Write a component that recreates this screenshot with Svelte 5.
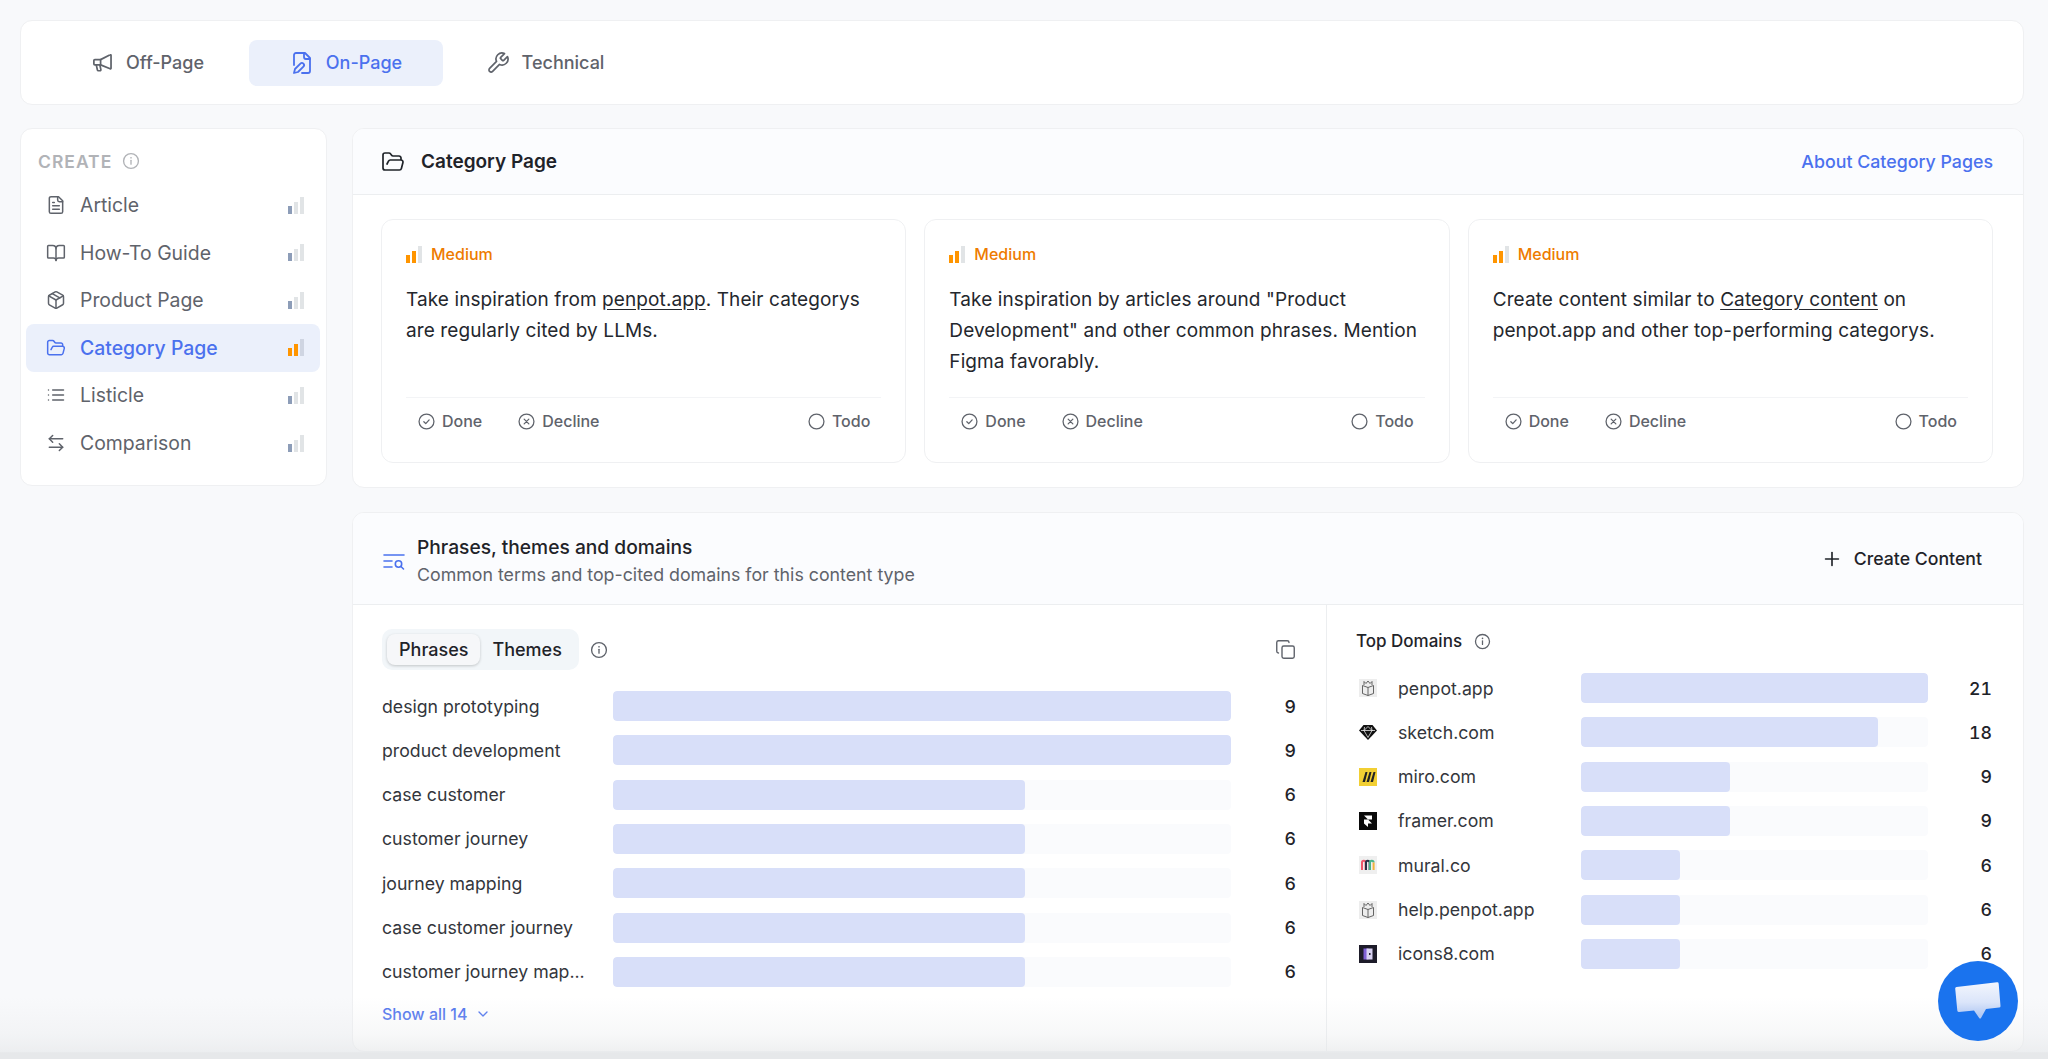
<script>
  const I = {
    speaker: ['M4 9h6l10-5a.6.6 0 0 1 .9.5v13.500a.6.6 0 0 1-.9.5L10 14.500H4a1 1 0 0 1-1-1V10a1 1 0 0 1 1-1z', 'M10 9v5.500', 'M5.500 14.500l1.200 5.300a1 1 0 0 0 1 .8h1.600a1 1 0 0 0 1-1.200l-1-4.400'],
    filepen: ['M12 22h6a2 2 0 0 0 2-2V7l-5-5H6a2 2 0 0 0-2 2v10', 'M14 2v4a2 2 0 0 0 2 2h4', 'M10.4 12.6a2 2 0 1 1 3 3L8 21l-4 1 1-4Z'],
    wrench: ['M14.7 6.3a1 1 0 0 0 0 1.4l1.6 1.6a1 1 0 0 0 1.4 0l3.77-3.77a6 6 0 0 1-7.94 7.94l-6.91 6.91a2.12 2.12 0 0 1-3-3l6.91-6.91a6 6 0 0 1 7.94-7.94l-3.76 3.76z'],
    file: ['M15 2H6a2 2 0 0 0-2 2v16a2 2 0 0 0 2 2h12a2 2 0 0 0 2-2V7Z', 'M14 2v4a2 2 0 0 0 2 2h4', 'M10 9H8', 'M16 13H8', 'M16 17H8'],
    book: ['M12 7v14', 'M3 18a1 1 0 0 1-1-1V4a1 1 0 0 1 1-1h5a4 4 0 0 1 4 4 4 4 0 0 1 4-4h5a1 1 0 0 1 1 1v13a1 1 0 0 1-1 1h-6a3 3 0 0 0-3 3 3 3 0 0 0-3-3z'],
    box: ['M21 8a2 2 0 0 0-1-1.73l-7-4a2 2 0 0 0-2 0l-7 4A2 2 0 0 0 3 8v8a2 2 0 0 0 1 1.73l7 4a2 2 0 0 0 2 0l7-4A2 2 0 0 0 21 16Z', 'M3.3 7 12 12l8.7-5', 'M12 22V12', 'M7.5 4.27l9 5.15'],
    folder: ['M6 14l1.5-2.9A2 2 0 0 1 9.24 10H20a2 2 0 0 1 1.94 2.5l-1.54 6a2 2 0 0 1-1.95 1.5H4a2 2 0 0 1-2-2V5a2 2 0 0 1 2-2h3.9a2 2 0 0 1 1.69.9l.81 1.2a2 2 0 0 0 1.67.9H18a2 2 0 0 1 2 2v2'],
    list: ['M3 6h.01', 'M3 12h.01', 'M3 18h.01', 'M8 6h13', 'M8 12h13', 'M8 18h13'],
    swap: ['M8 3 4 7l4 4', 'M4 7h16', 'M16 21l4-4-4-4', 'M20 17H4'],
    copy: ['M10 8h10a2 2 0 0 1 2 2v10a2 2 0 0 1-2 2H10a2 2 0 0 1-2-2V10a2 2 0 0 1 2-2z', 'M4 16a2 2 0 0 1-2-2V4a2 2 0 0 1 2-2h10a2 2 0 0 1 2 2'],
    plus: ['M5 12h14', 'M12 5v14'],
    chev: ['m6 9 6 6 6-6']
  };
  const nav = [
    ['Article', 'file'], ['How-To Guide', 'book'], ['Product Page', 'box'],
    ['Category Page', 'folder'], ['Listicle', 'list'], ['Comparison', 'swap']
  ];
  const ideas = [
    ['Take inspiration from ', 'penpot.app', '. Their categorys are regularly cited by LLMs.'],
    ['Take inspiration by articles around "Product Development" and other common phrases. Mention Figma favorably.', '', ''],
    ['Create content similar to ', 'Category content', ' on penpot.app and other top-performing categorys.']
  ];
  const phrases = [
    ['design prototyping', 9], ['product development', 9], ['case customer', 6], ['customer journey', 6],
    ['journey mapping', 6], ['case customer journey', 6], ['customer journey map...', 6]
  ];
  const domains = [
    ['penpot.app', 21, 'penpot'], ['sketch.com', 18, 'sketch'], ['miro.com', 9, 'miro'], ['framer.com', 9, 'framer'],
    ['mural.co', 6, 'mural'], ['help.penpot.app', 6, 'penpot'], ['icons8.com', 6, 'icons8']
  ];
</script>

{#snippet icon(name, size, sw = 2)}
  <svg class="ic" width={size} height={size} viewBox="0 0 24 24" fill="none" stroke="currentColor" stroke-width={sw} stroke-linecap="round" stroke-linejoin="round">
    {#each I[name] as d}<path {d} />{/each}
  </svg>
{/snippet}

{#snippet info(size)}
  <svg class="ic" width={size} height={size} viewBox="0 0 16 16" fill="none" stroke="currentColor" stroke-width="1.2" stroke-linecap="round">
    <circle cx="8" cy="8" r="6.6" /><path d="M8 7.4v3.4" /><path d="M8 5.1h.01" stroke-width="1.5" />
  </svg>
{/snippet}

{#snippet level(active, on = '#8d9db8', off = '#e1e4e6', mid = false)}
  <span class="lvl">
    <i class="b1" style="background:{active ? '#ff9500' : on}"></i>
    <i class="b2" style="background:{active ? '#ff9500' : off}"></i>
    <i class="b3" style="background:{mid ? '#cfd5e2' : off}"></i>
  </span>
{/snippet}

{#snippet favicon(kind)}
  <svg class="fav" width="18" height="18" viewBox="0 0 18 18">
    {#if kind === 'penpot'}
      <rect width="18" height="18" fill="#ededed" />
      <path d="M3.500 6.500 9 8.500l5.500-2v8L9 16.500l-5.500-2zM9 8.500v8M5 6V2.500L7 4.500l2-2.500 2 2.500 2-2V6" fill="none" stroke="#555" stroke-width=".9" stroke-linejoin="round" />
    {:else if kind === 'sketch'}
      <path d="M4.500 2h9L18 7.500 9 17 0 7.500z" fill="#111" />
      <path d="M2 7.500h14M5 7.500 9 14.500l4-7M5.500 4 5 7.500 9 3.500l4 4-.5-3.500" fill="none" stroke="#fff" stroke-width=".7" />
    {:else if kind === 'miro'}
      <rect width="18" height="18" fill="#f2cf33" />
      <path d="M6.500 4h2L6 14H3.500zM10.500 4h2L10 14H7.500zM14.500 4h2L14 14h-2.500z" fill="#232323" />
    {:else if kind === 'framer'}
      <rect width="18" height="18" fill="#0a0a0a" />
      <path d="M5 3.500h8v4H9zM5 7.500h4l4 4H9v3.500l-4-3.500z" fill="#fff" />
    {:else if kind === 'mural'}
      <rect width="18" height="18" fill="#efefef" />
      <path d="M3 14V6.500a1.800 1.800 0 0 1 3.600 0V14" fill="none" stroke="#f0566b" stroke-width="2" />
      <path d="M7 14V6.500a1.800 1.800 0 0 1 3.600 0V14" fill="none" stroke="#2a2f45" stroke-width="2" />
      <path d="M11 14V6.500a1.800 1.800 0 0 1 3.600 0" fill="none" stroke="#4ab58a" stroke-width="2" />
      <path d="M14.600 6.500V14" stroke="#f2b33d" stroke-width="2" />
    {:else}
      <rect width="18" height="18" fill="#1d1b29" />
      <rect x="4.500" y="3.500" width="5" height="11" fill="#7f5fd6" />
      <rect x="7.500" y="3.500" width="6" height="11" fill="#d9d2f3" />
      <rect x="10" y="8" width="1.500" height="2" fill="#1d1b29" />
    {/if}
  </svg>
{/snippet}

<div class="page">
  <nav class="tabs card">
    <div class="tab">{@render icon('speaker', 23, 1.8)}Off-Page</div>
    <div class="tab on">{@render icon('filepen', 24, 1.8)}On-Page</div>
    <div class="tab">{@render icon('wrench', 24, 1.7)}Technical</div>
  </nav>

  <div class="cols">
    <aside class="side card">
      <div class="create">CREATE {@render info(18)}</div>
      {#each nav as [label, ic], i}
        <div class="item" class:sel={i === 3}>
          {@render icon(ic, 20, 1.8)}
          <span class="lbl">{label}</span>
          {@render level(i === 3, '#8d9db8', '#e1e4e6', i === 3)}
        </div>
      {/each}
    </aside>

    <main class="main">
      <section class="panel card">
        <header class="head h1">
          {@render icon('folder', 24, 1.7)}
          <h2>Category Page</h2>
          <a class="about" href="#a">About Category Pages</a>
        </header>
        <div class="ideas">
          {#each ideas as [a, u, b]}
            <article class="idea">
              <div class="med">{@render level(true)}Medium</div>
              <p>{a}{#if u}<span class="u">{u}</span>{/if}{b}</p>
              <footer>
                <span class="act">
                  <svg class="ic" width="17" height="17" viewBox="0 0 16 16" fill="none" stroke="currentColor" stroke-width="1.200" stroke-linecap="round" stroke-linejoin="round"><circle cx="8" cy="8" r="7" /><path d="M5.500 8.200 7.300 10l3.200-3.500" /></svg>
                  Done
                </span>
                <span class="act">
                  <svg class="ic" width="17" height="17" viewBox="0 0 16 16" fill="none" stroke="currentColor" stroke-width="1.200" stroke-linecap="round"><circle cx="8" cy="8" r="7" /><path d="M5.800 5.800l4.400 4.400M10.200 5.800l-4.400 4.400" /></svg>
                  Decline
                </span>
                <span class="act todo">
                  <svg class="ic" width="17" height="17" viewBox="0 0 16 16" fill="none" stroke="currentColor" stroke-width="1.200"><circle cx="8" cy="8" r="7" /></svg>
                  Todo
                </span>
              </footer>
            </article>
          {/each}
        </div>
      </section>

      <section class="panel card second">
        <header class="head h2">
          <svg class="ic blue" width="22" height="22" viewBox="0 0 22 22" fill="none" stroke="currentColor" stroke-width="1.600" stroke-linecap="round"><path d="M1 4h20M1 10h8M1 16h8" /><circle cx="15.500" cy="13" r="3.200" /><path d="m18 15.500 2.500 2.500" /></svg>
          <div class="titles">
            <h3>Phrases, themes and domains</h3>
            <small>Common terms and top-cited domains for this content type</small>
          </div>
          <div class="create-btn">{@render icon('plus', 22, 1.8)}Create Content</div>
        </header>
        <div class="split">
          <div class="left">
            <div class="seg-row">
              <div class="seg"><span class="seg-on">Phrases</span><span class="seg-off">Themes</span></div>
              <span class="seg-info">{@render info(18)}</span>
              <span class="copy">{@render icon('copy', 21, 1.6)}</span>
            </div>
            <div class="rows">
              {#each phrases as [t, v]}
                <div class="row prow">
                  <span class="t">{t}</span>
                  <span class="track"><span class="fill" style="width:{(v / 9) * 100}%"></span></span>
                  <span class="v">{v}</span>
                </div>
              {/each}
            </div>
            <a class="show" href="#s">Show all 14 {@render icon('chev', 16, 2)}</a>
          </div>
          <div class="right">
            <div class="td">Top Domains {@render info(17)}</div>
            <div class="rows">
              {#each domains as [t, v, k]}
                <div class="row drow">
                  {@render favicon(k)}
                  <span class="t">{t}</span>
                  <span class="track"><span class="fill" style="width:{(v / 21) * 100}%"></span></span>
                  <span class="v">{v}</span>
                </div>
              {/each}
            </div>
          </div>
        </div>
      </section>
    </main>
  </div>

  <div class="fade"></div>
  <div class="chat">
    <svg width="46" height="38" viewBox="0 0 46 38">
      <defs><linearGradient id="cg" x1="0" y1="0" x2="0" y2="1"><stop offset="0" stop-color="#f3f6fd" /><stop offset=".55" stop-color="#dbe5fa" /><stop offset=".9" stop-color="#b4caf3" /></linearGradient></defs>
      <path d="M1.500 5 42 .3a1.500 1.500 0 0 1 1.700 1.400L45.500 24a1.500 1.500 0 0 1-1.400 1.600L31 27l-5 9a1 1 0 0 1-1.800 0L19 28.500 4 30a1.500 1.500 0 0 1-1.700-1.400L.2 6.500A1.500 1.500 0 0 1 1.500 5z" fill="url(#cg)" />
    </svg>
  </div>
</div>

<style>
  :global(body) { margin: 0; background: #f8f9fb; }
  .page { font-family: Inter, "Noto Sans", sans-serif; height: 1059px; overflow: hidden; box-sizing: border-box; padding: 20px 24px 0 20px; color: #1f2329; position: relative; }
  .card { background: #fff; border: 1px solid #eff0f2; border-radius: 12px; box-sizing: border-box; }
  .ic { flex: none; display: block; }
  .tabs { height: 85px; display: flex; align-items: center; padding-left: 32px; gap: 7px; }
  .tab { display: flex; align-items: center; gap: 12px; height: 46px; width: 194px; justify-content: center; font-size: 18px; font-weight: 500; color: #5f636b; border-radius: 8px; }
  .tab:first-child { width: 189px; }
  .tab:last-child { width: 190px; }
  .tab.on { background: #ebf0fb; color: #4b71ee; }
  .cols { display: flex; align-items: flex-start; gap: 25px; margin-top: 23px; }
  .side { width: 307px; flex: none; padding: 16px 6px 16px 5px; height: 358px; }
  .create { display: flex; align-items: center; gap: 10px; font-size: 17.500px; font-weight: 600; color: #b1b3b7; letter-spacing: 1px; padding: 0 12px; height: 32px; margin-bottom: 4px; }
  .item { display: flex; align-items: center; gap: 14px; height: 48px; padding: 0 16px 0 20px; font-size: 19.400px; color: #5f636b; border-radius: 8px; margin-bottom: -0.400px; }
  .item.sel { background: #ebf0fb; color: #4b71ee; font-weight: 500; }
  .lbl { flex: 1; }
  .lvl { display: inline-flex; align-items: flex-end; gap: 2px; height: 17px; flex: none; }
  .lvl i { width: 4px; display: block; }
  .b1 { height: 8px; } .b2 { height: 12px; } .b3 { height: 17px; }
  .main { flex: 1; min-width: 0; display: flex; flex-direction: column; gap: 24px; }
  .panel { overflow: hidden; }
  .head { display: flex; align-items: center; background: #fbfcfe; border-bottom: 1px solid #eceef0; }
  .h1 { height: 65px; padding: 0 30px 0 28px; gap: 16px; }
  .h1 h2 { margin: 0; font-size: 19px; font-weight: 600; color: #1f2329; flex: 1; }
  .about { color: #4b71ee; font-size: 17.800px; font-weight: 500; text-decoration: none; }
  .ideas { display: grid; grid-template-columns: repeat(3, 1fr); gap: 18px; padding: 24px 30px 24px 28px; }
  .idea { border: 1px solid #eff0f2; border-radius: 12px; padding: 24px 24px 0; height: 244px; box-sizing: border-box; display: flex; flex-direction: column; }
  .med { display: flex; align-items: center; gap: 9px; color: #ee7b00; font-size: 16px; font-weight: 500; height: 20px; }
  .idea p { margin: 20px 0 0; font-size: 19px; letter-spacing: .1px; line-height: 31px; color: #24272d; height: 94px; }
  .u { text-decoration: underline; text-underline-offset: 3px; }
  .idea footer { margin-top: 19px; border-top: 1px solid #f3f4f6; display: flex; gap: 36px; padding: 0 11px 0 12px; height: 46px; align-items: center; }
  .act { display: flex; align-items: center; gap: 7px; color: #5f636b; font-size: 16px; font-weight: 500; }
  .todo { margin-left: auto; }
  .second { height: 540px; }
  .h2 { height: 91px; padding: 0 30px 0 30px; gap: 12px; }
  .h2 .blue { color: #4b71ee; margin-top: 6px; }
  .titles { flex: 1; display: flex; flex-direction: column; gap: 5px; padding-top: 2px; }
  h3 { margin: 0; font-size: 19.200px; font-weight: 500; color: #1f2329; }
  small { font-size: 17.800px; color: #5f636b; }
  .create-btn { display: flex; align-items: center; gap: 11px; font-size: 17.700px; font-weight: 500; padding-right: 11px; }
  .split { display: grid; grid-template-columns: 974px 1fr; }
  .left { padding: 24px 29px 0 29px; border-right: 1px solid #eceef0; height: 447px; box-sizing: border-box; }
  .seg-row { display: flex; align-items: center; gap: 12px; height: 41px; margin-bottom: 21px; }
  .seg { background: #f2f6f9; border-radius: 10px; padding: 5px; display: flex; font-size: 18px; font-weight: 500; height: 41px; box-sizing: border-box; align-items: center; }
  .seg-on { background: #f6f7f9; box-shadow: 0 1px 3px rgba(0,0,0,.2); border-radius: 8px; padding: 0 12px; height: 31px; display: flex; align-items: center; }
  .seg-off { padding: 0 12px; }
  .seg-info { color: #5f636b; margin-left: -1px; }
  .copy { margin-left: auto; color: #5f636b; margin-right: 1px; }
  .rows { display: flex; flex-direction: column; gap: 14.330px; }
  .row { display: flex; align-items: center; height: 30px; font-size: 17.700px; color: #33363c; }
  .track { display: block; height: 30px; background: #fafbfd; border-radius: 4px; overflow: hidden; flex: none; }
  .fill { display: block; height: 100%; background: #d8dff9; border-radius: 4px; }
  .v { flex: 1; text-align: right; color: #1f2329; font-weight: 500; padding-right: 1px; font-variant-numeric: tabular-nums; }
  .prow .t { width: 231px; flex: none; white-space: nowrap; }
  .prow .track { width: 618px; }
  .drow .fav { margin: 0 21px 0 3px; flex: none; }
  .drow .t { width: 183px; flex: none; }
  .drow .track { width: 347px; }
  .show { display: inline-flex; align-items: center; gap: 8px; margin-top: 17px; color: #4b71ee; font-size: 16px; font-weight: 500; text-decoration: none; }
  .right { padding: 24px 30px 0 29px; }
  .td { display: flex; align-items: center; gap: 12px; font-size: 17px; font-weight: 500; height: 24px; margin-bottom: 20px; }
  .td :global(svg) { color: #5f636b; }
  .fade { position: absolute; left: 0; right: 0; bottom: 0; height: 62px; background: linear-gradient(to bottom, rgba(230,232,234,0), rgba(230,232,234,.3) 60%, rgba(230,232,234,.65) 88%, rgba(230,232,234,1) 90%); pointer-events: none; }
  .chat { position: absolute; left: 1938px; top: 961px; width: 80px; height: 80px; border-radius: 50%; background: #1a73ee; display: flex; align-items: center; justify-content: center; }
</style>
